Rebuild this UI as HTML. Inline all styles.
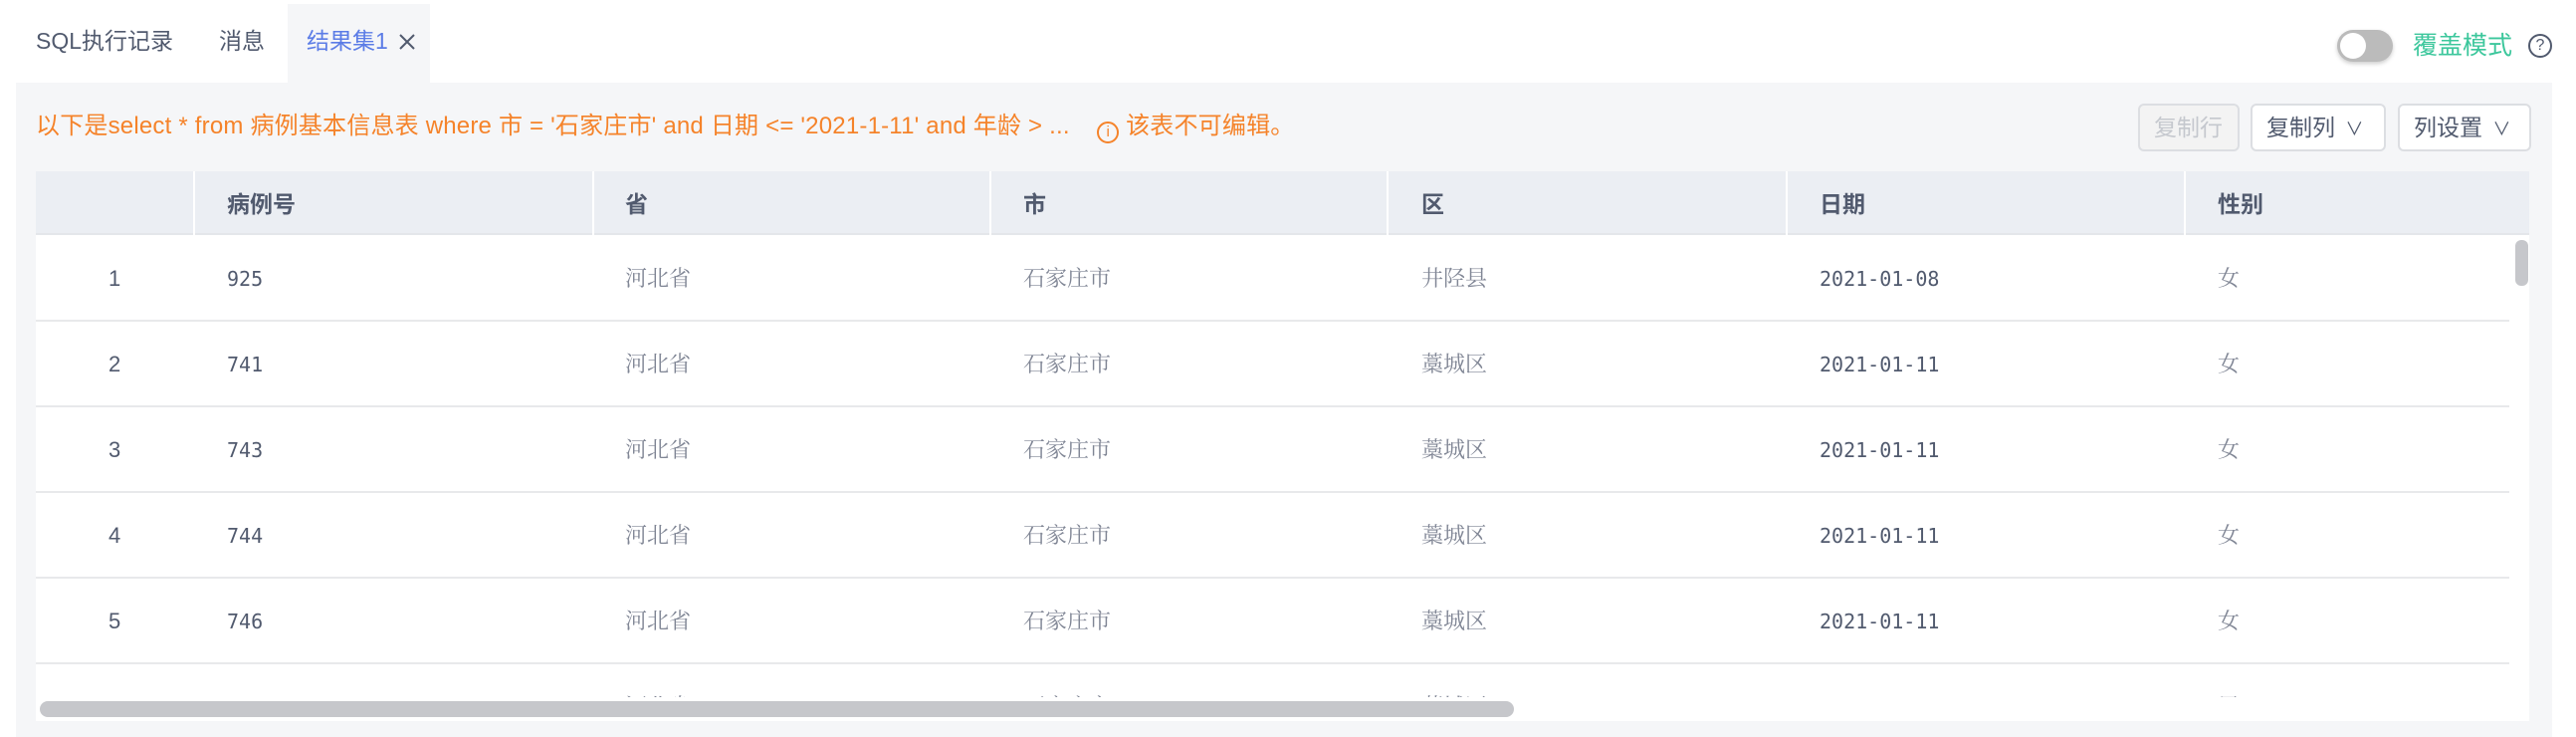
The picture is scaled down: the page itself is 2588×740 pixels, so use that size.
<!DOCTYPE html>
<html><head><meta charset="utf-8"><style>
*{margin:0;padding:0;box-sizing:border-box}
body{width:2588px;height:740px;background:#fff;font-family:"Liberation Sans","Noto Sans CJK SC",sans-serif;position:relative;overflow:hidden;color:#515a6e}
.abs{position:absolute}
.tab{position:absolute;top:0;height:83px;line-height:83px;font-size:23px;color:#515a6e}
.panel{position:absolute;left:16px;top:83px;width:2548px;height:657px;background:#f5f6f8}
.btn{position:absolute;top:104px;height:48px;border:2px solid #dcdee2;border-radius:6px;background:#fff;font-size:23px;line-height:44px;padding-left:14px;color:#515a6e}
.tbl{position:absolute;left:36px;top:172px;width:2505px;height:552px;background:#fff;overflow:hidden}
.hd{position:absolute;left:0;top:0;width:2505px;height:64px;background:#ebeef3;border-bottom:2px solid #e4e6ea}
.hc{position:absolute;top:0;height:64px;line-height:66px;font-size:23px;font-weight:bold;color:#515a6e}
.vd{position:absolute;top:0;width:2px;height:64px;background:#fff}
.row{position:absolute;left:0;width:2485px;height:86px;border-bottom:2px solid #e8e9eb}
.c{position:absolute;top:0;line-height:86px;font-size:22px;color:#515a6e}
.m{font-family:"DejaVu Sans Mono","Liberation Mono",monospace;font-size:20px}
.z{color:#808695;font-family:"Liberation Serif","Noto Serif CJK SC",serif}
</style></head><body>
<div class="tab" style="left:36px">SQL执行记录</div>
<div class="tab" style="left:220px">消息</div>
<div class="abs" style="left:289px;top:4px;width:143px;height:79px;background:#f5f6f8"></div>
<div class="tab" style="left:308px;color:#5b7ce6">结果集1</div>
<svg class="abs" style="left:400px;top:33px" width="18" height="18" viewBox="0 0 18 18"><path d="M2 2L16 16M16 2L2 16" stroke="#515a6e" stroke-width="2"/></svg>
<div class="abs" style="left:2348px;top:30px;width:56px;height:32px;border-radius:16px;background:#bbb;box-shadow:0 2px 4px rgba(0,0,0,.2)"></div>
<div class="abs" style="left:2351px;top:33px;width:26px;height:26px;border-radius:50%;background:#fff"></div>
<div class="abs" style="left:2424px;top:26px;font-size:25px;line-height:40px;color:#3cc79c">覆盖模式</div>
<div class="abs" style="left:2540px;top:34px;width:24px;height:24px;border:2px solid #515a6e;border-radius:50%;font-size:16px;line-height:20px;text-align:center;color:#515a6e">?</div>
<div class="panel"></div>
<div class="abs" style="left:36px;top:110px;font-size:24px;letter-spacing:0.2px;line-height:34px;color:#f5832a;white-space:nowrap">以下是select * from 病例基本信息表 where 市 = '石家庄市' and 日期 &lt;= '2021-1-11' and 年龄 &gt; ... &nbsp;&nbsp;&nbsp;<span style="display:inline-block;width:22px;height:22px;border:2px solid #f5832a;border-radius:50%;font-size:15px;line-height:18px;text-align:center;vertical-align:-3px">i</span> 该表不可编辑。</div>
<div class="btn" style="left:2148px;width:102px;background:#f3f3f3;color:#c5c8ce">复制行</div>
<div class="btn" style="left:2261px;width:136px">复制列 <span style="font-size:18px;margin-left:4px">∨</span></div>
<div class="btn" style="left:2409px;width:134px">列设置 <span style="font-size:18px;margin-left:4px">∨</span></div>
<div class="tbl">
<div class="hd">
<div class="vd" style="left:158px"></div><div class="vd" style="left:559px"></div><div class="vd" style="left:958px"></div><div class="vd" style="left:1357px"></div><div class="vd" style="left:1758px"></div><div class="vd" style="left:2158px"></div>
<div class="hc" style="left:192px">病例号</div><div class="hc" style="left:592px">省</div><div class="hc" style="left:992px">市</div><div class="hc" style="left:1392px">区</div><div class="hc" style="left:1792px">日期</div><div class="hc" style="left:2192px">性别</div>
</div>
<div class="row" style="top:65px"><div class="c" style="left:73px">1</div><div class="c m" style="left:192px">925</div><div class="c z" style="left:592px">河北省</div><div class="c z" style="left:992px">石家庄市</div><div class="c z" style="left:1392px">井陉县</div><div class="c m" style="left:1792px">2021-01-08</div><div class="c z" style="left:2192px">女</div></div>
<div class="row" style="top:151px"><div class="c" style="left:73px">2</div><div class="c m" style="left:192px">741</div><div class="c z" style="left:592px">河北省</div><div class="c z" style="left:992px">石家庄市</div><div class="c z" style="left:1392px">藁城区</div><div class="c m" style="left:1792px">2021-01-11</div><div class="c z" style="left:2192px">女</div></div>
<div class="row" style="top:237px"><div class="c" style="left:73px">3</div><div class="c m" style="left:192px">743</div><div class="c z" style="left:592px">河北省</div><div class="c z" style="left:992px">石家庄市</div><div class="c z" style="left:1392px">藁城区</div><div class="c m" style="left:1792px">2021-01-11</div><div class="c z" style="left:2192px">女</div></div>
<div class="row" style="top:323px"><div class="c" style="left:73px">4</div><div class="c m" style="left:192px">744</div><div class="c z" style="left:592px">河北省</div><div class="c z" style="left:992px">石家庄市</div><div class="c z" style="left:1392px">藁城区</div><div class="c m" style="left:1792px">2021-01-11</div><div class="c z" style="left:2192px">女</div></div>
<div class="row" style="top:409px"><div class="c" style="left:73px">5</div><div class="c m" style="left:192px">746</div><div class="c z" style="left:592px">河北省</div><div class="c z" style="left:992px">石家庄市</div><div class="c z" style="left:1392px">藁城区</div><div class="c m" style="left:1792px">2021-01-11</div><div class="c z" style="left:2192px">女</div></div>
<div class="row" style="top:495px;border:none"><div class="c" style="left:73px">6</div><div class="c m" style="left:192px">747</div><div class="c z" style="left:592px">河北省</div><div class="c z" style="left:992px">石家庄市</div><div class="c z" style="left:1392px">藁城区</div><div class="c m" style="left:1792px">2021-01-11</div><div class="c z" style="left:2192px">男</div></div>
<div class="abs" style="left:0;top:528px;width:2505px;height:24px;background:#fff"></div>
<div class="abs" style="left:4px;top:532px;width:1481px;height:16px;border-radius:8px;background:#c6c7cb"></div>
<div class="abs" style="left:2491px;top:69px;width:13px;height:46px;border-radius:6px;background:#c6c7cb"></div>
</div>
</body></html>
